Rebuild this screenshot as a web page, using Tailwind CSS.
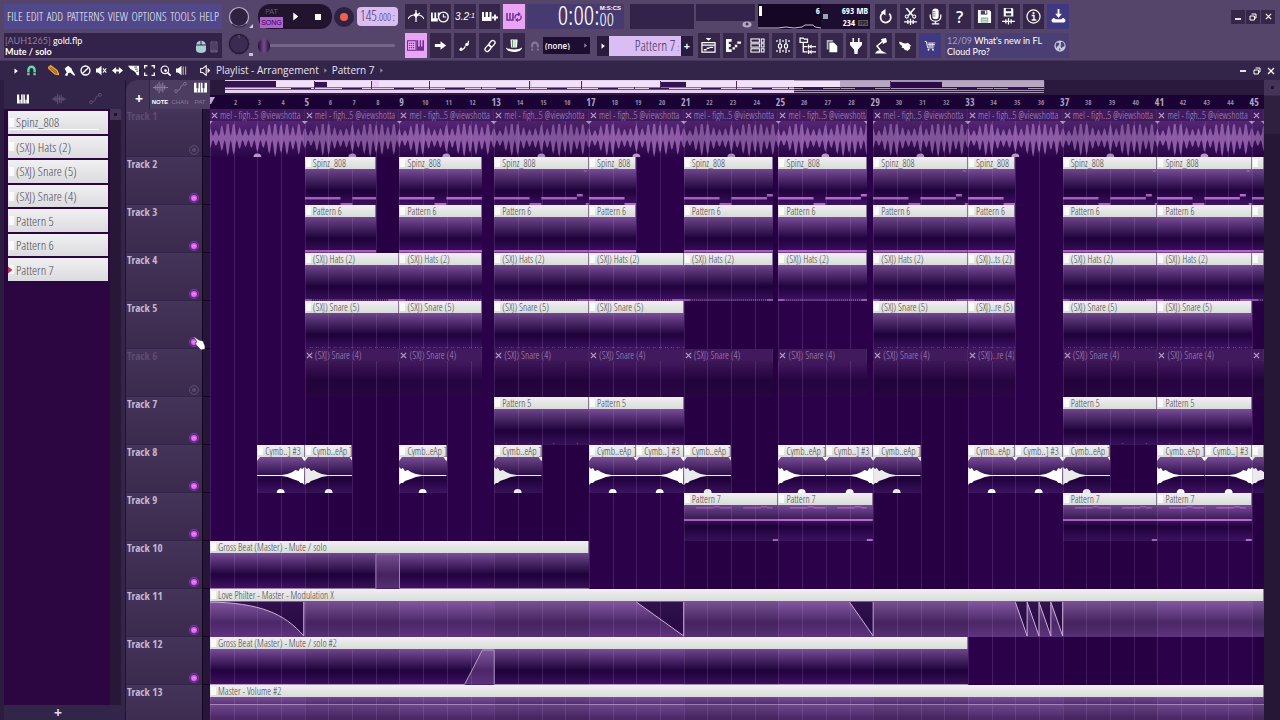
<!DOCTYPE html>
<html lang="en">
<head>
  <meta charset="UTF-8">
  <meta name="viewport" content="width=device-width, initial-scale=1.0">
  <title>gold.flp - Playlist</title>
  <script src="https://cdn.jsdelivr.net/npm/@tailwindcss/browser@4"></script>
</head>
<body class="h-screen overflow-hidden bg-[#33244a] font-['Open_Sans','Noto_Sans',sans-serif] text-white">

  <!-- Icon sprite -->
  <svg class="hidden">
    <symbol id="i-metronome" viewBox="0 0 16 16"><path d="M0 10c1-2 3-4 6-4M16 10c-1-2-3-4-6-4" fill="none" stroke="currentColor" stroke-width="1.200"/><path d="M8 1v12M8 7l4-3" stroke="currentColor" stroke-width="1.200"/><path d="M8 3l2.500 3L8 9 5.500 6z" fill="currentColor"/></symbol>
    <symbol id="i-wait" viewBox="0 0 16 16"><path d="M0 4h1.600v5H3V4h1.600v5H6V4h1.600v2L6 8v4H0z" fill="currentColor"/><circle cx="11" cy="8" r="4.300" fill="none" stroke="currentColor" stroke-width="1.200"/><path d="M11 5.500V8h2.500" fill="none" stroke="currentColor"/></symbol>
    <symbol id="i-keysplus" viewBox="0 0 16 16"><path d="M0 3h2v5h1.500V3h2.500v5h1.500V3h2v9H0z" fill="currentColor"/><path d="M13 5.500v6M10 8.500h6" stroke="currentColor" stroke-width="1.800"/></symbol>
    <symbol id="i-loop" viewBox="0 0 16 16"><path d="M1 4v7h6V4M4 4v6" fill="none" stroke="currentColor" stroke-width="1.500"/><path d="M9 9.500V8a2.500 2.500 0 0 1 4.500-1.500M15 6.500V8a2.500 2.500 0 0 1-4.500 2" fill="none" stroke="currentColor" stroke-width="1.300"/><path d="M12 3l3 2-3 2zM12 13l-3-2 3-2z" fill="currentColor"/></symbol>
    <symbol id="i-keys" viewBox="0 0 16 16"><path d="M0 2h3v7h2.500V2h5v7H13V2h3v12H0z" fill="currentColor"/><path d="M8 2v12M4.200 9v5M11.800 9v5" stroke="#33244a" stroke-width=".8"/></symbol>
    <symbol id="i-typing" viewBox="0 0 16 16"><rect x=".5" y="3.500" width="8" height="9" fill="none" stroke="currentColor"/><path d="M2 6h5.500M2 8h5.500M2 10h5.500" stroke="currentColor" stroke-dasharray="1 .8"/><path d="M9 3h1.500v6H12V3h1.200v6h1.300V3H16v10H9z" fill="currentColor"/></symbol>
    <symbol id="i-arrow" viewBox="0 0 16 16"><path d="M2 6.500h6V3.500L14 8l-6 4.500V9.500H2z" fill="currentColor"/></symbol>
    <symbol id="i-slide" viewBox="0 0 16 16"><path d="M2 13c3 1 6-1 7-4M9 8c3-1 4-3 4-6" fill="none" stroke="currentColor" stroke-width="1.600"/><circle cx="4" cy="12.500" r="2" fill="currentColor"/><circle cx="11" cy="6.500" r="2" fill="currentColor"/></symbol>
    <symbol id="i-link" viewBox="0 0 16 16"><g transform="rotate(-50 8 8)" fill="none" stroke="currentColor" stroke-width="1.500"><rect x="0.500" y="5.500" width="8" height="5" rx="2.500"/><rect x="7.500" y="5.500" width="8" height="5" rx="2.500"/></g></symbol>
    <symbol id="i-hat" viewBox="0 0 16 16"><path d="M4.500 1.500h7l-.5 8h-6z" fill="#fff"/><path d="M6.500 2v7" stroke="#5aa060" stroke-width="1.300"/><path d="M9 2v7" stroke="#b5b0c0"/><path d="M0 9.500c0 6 16 6 16 0-3 2.500-13 2.500-16 0z" fill="#fff"/></symbol>
    <symbol id="i-undo" viewBox="0 0 16 16"><path d="M5 4.500a5.500 5.500 0 1 0 7 .5" fill="none" stroke="currentColor" stroke-width="1.800"/><path d="M8 0v7L3 3.500z" fill="currentColor"/></symbol>
    <symbol id="i-cut" viewBox="0 0 16 16"><path d="M4 0l6 7M12 0L6 7" stroke="currentColor" stroke-width="1.500"/><circle cx="4.500" cy="8" r="1.500" fill="none" stroke="currentColor"/><circle cx="11.500" cy="8" r="1.500" fill="none" stroke="currentColor"/><path d="M2 13h12M5.500 11v4M10.500 11v4M8 10v6" stroke="currentColor" stroke-width="1.200"/></symbol>
    <symbol id="i-mic" viewBox="0 0 16 16"><rect x="5" y="0.500" width="6" height="10" rx="3" fill="currentColor"/><path d="M5 3.500h3M5 5.500h3M5 7.500h3" stroke="#35264a" stroke-width=".6"/><path d="M3 6v2c0 6 10 6 10 0V6M8 12v2.500M4.500 15h7" fill="none" stroke="currentColor" stroke-width="1.200"/></symbol>
    <symbol id="i-save" viewBox="0 0 16 16"><path d="M1 1h12l2 2v12H1z" fill="currentColor"/><path d="M4 1.500h7V6H4z" fill="#4d4060"/><path d="M8.500 2h1.500v3H8.500z" fill="#fff"/><path d="M4 9h8v5.500H4z" fill="#8fb5a5"/><path d="M5 11h6M5 13h6" stroke="#fff" stroke-width=".7"/></symbol>
    <symbol id="i-savenew" viewBox="0 0 16 16"><path d="M3.500 0h8l1 1v7h-9z" fill="currentColor"/><path d="M5.500.5h5V3h-5zM5.500 5h5v2h-5z" fill="#35264a"/><path d="M2 12.500h12M5.500 10.500v4M10.500 10.500v4M8 9.500v6" stroke="currentColor" stroke-width="1.200"/></symbol>
    <symbol id="i-info" viewBox="0 0 16 16"><circle cx="8" cy="8" r="7" fill="none" stroke="currentColor" stroke-width="1.300"/><path d="M6 7h2.500v4.500M6 11.700h5" fill="none" stroke="currentColor" stroke-width="1.500"/><circle cx="8" cy="4.300" r="1.200" fill="currentColor"/></symbol>
    <symbol id="i-download" viewBox="0 0 16 16"><path d="M8 0v7" stroke="currentColor" stroke-width="2"/><path d="M4.500 5h7L8 9.500z" fill="currentColor"/><path d="M2 10c1-1 2 0 3 1h6c1-1 2-2 3-1 2 1 2 4-1 4.500H3C0 14 0 11 2 10z" fill="currentColor"/></symbol>
    <symbol id="i-playlist" viewBox="0 0 16 16"><path d="M5 0h6L8 3z" fill="currentColor"/><path d="M1 5h14v10H1zM1 7.500h14" fill="none" stroke="currentColor" stroke-width="1.300"/><path d="M3 12.500h3M6 11h3M9 10h4" stroke="currentColor" stroke-width="1.500"/></symbol>
    <symbol id="i-piano" viewBox="0 0 16 16"><path d="M0 1h6v3H3v2.500h2v3H3V12h3v3H0z" fill="currentColor"/><path d="M7 11h2.500M9.500 8.500H12M12 5h4" stroke="currentColor" stroke-width="2.500"/></symbol>
    <symbol id="i-rack" viewBox="0 0 16 16"><g fill="none" stroke="currentColor" stroke-width="1.100"><rect x="1" y="1" width="9" height="3.500"/><rect x="1" y="6.200" width="9" height="3.500"/><rect x="1" y="11.500" width="9" height="3.500"/><path d="M12 1h3v3.500h-3zM12 6.200h3v3.500h-3zM12 11.500h3V15h-3z"/></g></symbol>
    <symbol id="i-mixer" viewBox="0 0 16 16"><g stroke="currentColor" fill="none" stroke-width="1.200"><path d="M5 1v5M5 10v5M11 1v5M11 10v5M2 2v2M2 12v2M14 2v2M14 12v2M8 2v2M8 12v2"/><rect x="3.500" y="6" width="3" height="4" rx="1"/><rect x="9.500" y="6" width="3" height="4" rx="1"/></g></symbol>
    <symbol id="i-browser" viewBox="0 0 16 16"><path d="M1 1h3l1 1h3v3H1zM4 5v9h4M4 9h4M9 7v4M12 9h4M9 12v4M12 14h4" fill="none" stroke="currentColor" stroke-width="1.200"/><path d="M9 9l3-2v4zM9 14l3-2v4z" fill="currentColor"/></symbol>
    <symbol id="i-copy" viewBox="0 0 16 16"><path d="M2 1h7v2H4v9H2z" fill="#b8b0c4"/><path d="M5 4h5l4 4v7H5z" fill="currentColor"/></symbol>
    <symbol id="i-plug" viewBox="0 0 16 16"><path d="M4.500 0H6v4h4V0h1.500v4H14v3l-4 4.500-.5 4.500h-3L6 11.500 2 7V4h2.500z" fill="currentColor"/></symbol>
    <symbol id="i-lamp" viewBox="0 0 16 16"><path d="M8 1l5-1 1 4-4 2z" fill="currentColor"/><path d="M10 3L4 8l4 5" fill="none" stroke="currentColor" stroke-width="1.500"/><path d="M2 15.500c1-3 5-4 6-3l6 3z" fill="currentColor"/></symbol>
    <symbol id="i-hand" viewBox="0 0 16 16"><path d="M0 3.500c2-1 5 2 8 2l3-1 4 4-2 1 1 2-3 3-4-1-1-2-3-1 1-2-3-2z" fill="currentColor"/></symbol>
    <symbol id="i-cart" viewBox="0 0 16 16"><path d="M1 2h2l2 8.500h8" fill="none" stroke="currentColor" stroke-width="1.200"/><path d="M4.500 4H15M5 6h9.500M5.500 8H14M8 4v5M11 4v5" stroke="currentColor"/><circle cx="6" cy="13" r="1.200" fill="currentColor"/><circle cx="12" cy="13" r="1.200" fill="currentColor"/></symbol>
    <symbol id="i-globe" viewBox="0 0 16 16"><circle cx="8" cy="8" r="7.500" fill="#c9c6d6"/><path d="M3 4c2-2 5 0 4 2S4 8 4 10 1 8 3 4zM9 3c3-1 5 1 5 4s-2 1-3 3-3-1-2-3 0-2 0-4zM7 11c2 0 2 3 0 3z" fill="#4c4578"/></symbol>
    <symbol id="i-magnet" viewBox="0 0 16 16"><path d="M3.500 15V7a4.500 4.500 0 0 1 9 0v8" fill="none" stroke="currentColor" stroke-width="3.400"/><path d="M1.500 11.200h4M10.500 11.200h4" stroke="#33244a" stroke-width="1.200"/></symbol>
    <symbol id="i-wave" viewBox="0 0 16 16"><path d="M0 8h16M2.500 6v4M4.500 4.500v7M6.500 2v12M8.500 4v8M10.500 3v10M12.500 5.500v5" stroke="currentColor" stroke-width="1.100"/></symbol>
    <symbol id="i-auto" viewBox="0 0 16 16"><circle cx="2.500" cy="12.500" r="1.800" fill="none" stroke="currentColor"/><circle cx="13.500" cy="3.500" r="1.800" fill="none" stroke="currentColor"/><path d="M4 12l3-1.500L9 6l3-1.500" fill="none" stroke="currentColor"/></symbol>
    <symbol id="i-min" viewBox="0 0 16 16"><path d="M2 12h12" stroke="currentColor" stroke-width="3.500"/></symbol>
    <symbol id="i-restore" viewBox="0 0 16 16"><path d="M5 2h9v8h-3M2 6h9v8H2z" fill="none" stroke="currentColor" stroke-width="2"/></symbol>
    <symbol id="i-close" viewBox="0 0 16 16"><path d="M2 2l12 12M14 2L2 14" stroke="currentColor" stroke-width="2.600"/></symbol>
    <symbol id="i-tri" viewBox="0 0 16 16"><path d="M4 1l9 7-9 7z" fill="currentColor"/></symbol>
    <symbol id="i-pencil" viewBox="0 0 16 16"><path d="M0 4l4-3 9 7 3 6-6-1z" fill="#8a5a28" stroke="#f0ab3c" stroke-width="1.800"/><path d="M3 3l9 8" stroke="#f0ab3c" stroke-width="1.200"/></symbol>
    <symbol id="i-brush" viewBox="0 0 16 16"><path d="M1 5l5-4 5 4 1 3 4 6-1 2-6-5-3 1-1 4-4-1 3-4z" fill="currentColor"/></symbol>
    <symbol id="i-ban" viewBox="0 0 16 16"><circle cx="8" cy="8" r="6.500" fill="none" stroke="currentColor" stroke-width="2"/><path d="M3.500 12.500l9-9" stroke="currentColor" stroke-width="2"/></symbol>
    <symbol id="i-mute" viewBox="0 0 16 16"><path d="M0 5h3l5-4v14l-5-4H0z" fill="currentColor"/><path d="M10 5l5 6M15 5l-5 6" stroke="currentColor" stroke-width="1.500"/></symbol>
    <symbol id="i-stretch" viewBox="0 0 16 16"><path d="M0 8l6-5v3.500h4V3l6 5-6 5V9.500H6V13z" fill="currentColor"/></symbol>
    <symbol id="i-slice" viewBox="0 0 16 16"><path d="M0 1h16v14h-3l-2-4-2-2-5-3z" fill="currentColor"/><path d="M9 3h4M10 6h4M12 9h3" stroke="#33244a" stroke-width="1.200"/></symbol>
    <symbol id="i-select" viewBox="0 0 16 16"><path d="M1 5V1h4M11 1h4v4M15 11v4h-4M5 15H1v-4" fill="none" stroke="currentColor" stroke-width="2"/></symbol>
    <symbol id="i-zoom" viewBox="0 0 16 16"><circle cx="7" cy="7" r="5.500" fill="none" stroke="currentColor" stroke-width="1.600"/><path d="M11 11l4.500 4.500" stroke="currentColor" stroke-width="2.500"/><circle cx="8" cy="8" r="2" fill="currentColor"/></symbol>
    <symbol id="i-play" viewBox="0 0 16 16"><path d="M0 5h3l5-4v14l-5-4H0z" fill="currentColor"/><path d="M10.500 2v12M14 2v12" stroke="#d9a58a" stroke-width="1.600"/></symbol>
    <symbol id="i-speaker" viewBox="0 0 16 16"><path d="M1 5h3l5-4v14l-5-4H1z" fill="none" stroke="currentColor" stroke-width="1.500"/><path d="M11 4l4 4-4 4z" fill="currentColor"/></symbol>
    <symbol id="i-led" viewBox="0 0 16 16"><circle cx="8" cy="8" r="7.300" fill="#5b1f7c" stroke="#9a4fb8" stroke-width="1"/><circle cx="8" cy="8" r="5" fill="#d45cee"/><path d="M5 7h6M5 9.500h6" stroke="#f4b6ff" stroke-width="1"/></symbol>
    <symbol id="i-ledoff" viewBox="0 0 16 16"><circle cx="8" cy="8" r="7" fill="none" stroke="#6a5879" stroke-width="1.400"/><circle cx="8" cy="8" r="3.500" fill="#59476a"/></symbol>
  </svg>

  <div class="flex h-full flex-col">

    <!-- Main toolbar -->
    <header class="flex h-[61px] flex-none flex-col gap-1 border-b border-[#47365c] bg-[#56456a] pt-1">

      <div class="flex h-[25px] items-center pl-1">
        <nav class="flex h-[25px] w-[218px] flex-none items-center justify-between bg-[#51488a] px-[3px] font-['Open_Sans_Condensed_Light','Open_Sans_Condensed','Liberation_Sans',sans-serif] text-[12px] text-[#f4f1fa]">
          <button>FILE</button><button>EDIT</button><button>ADD</button><button>PATTERNS</button><button>VIEW</button><button>OPTIONS</button><button>TOOLS</button><button>HELP</button>
        </nav>
        <svg class="ml-[5px] h-[24px] w-[26px] flex-none" viewBox="0 0 26 24"><circle cx="12" cy="12" r="9.500" fill="#2f2142" stroke="#b9adc8" stroke-width="1.200"/><path d="M5 19a9.500 9.500 0 0 0 14 0" fill="none" stroke="#3a2b4e" stroke-width="1.500"/><path d="M26 19v4h-4z" fill="#d4cddd"/></svg>
        <div class="ml-[5px] flex h-[25px] w-[74px] flex-none items-center rounded-xl bg-[#22142f] pl-[2px]">
          <div class="flex w-[23px] flex-col text-center font-['Liberation_Sans',sans-serif] text-[7px] leading-[11px]">
            <button class="text-[#6a5879]">PAT</button>
            <button class="bg-[#b45fd8] text-[#2b0f3d]">SONG</button>
          </div>
          <button class="ml-[8px]" aria-label="Play"><svg class="size-[9px]"><use href="#i-tri"/></svg></button>
          <button class="ml-[15px] size-[6px] bg-white" aria-label="Stop"></button>
        </div>
        <button class="ml-[2px] flex size-[20px] flex-none items-center justify-center rounded-full bg-[#2f2142]" aria-label="Record"><span class="size-[8px] rounded-full bg-[#f0604f]"></span></button>
        <button class="ml-[3px] flex h-[19px] w-[41px] flex-none items-baseline justify-center rounded bg-[#d9bdf3] font-['Open_Sans_Condensed_Light','Open_Sans_Condensed','Liberation_Sans',sans-serif] text-[14px] leading-[18px] text-[#452e5e]" aria-label="Tempo">145<span class="text-[10px]">.000 :</span></button>
        <div class="ml-[7px] grid h-[25px] w-[120px] flex-none grid-cols-5 gap-[3px]">
          <button class="flex items-center justify-center bg-[#35264a]" aria-label="Metronome"><svg class="size-[16px]"><use href="#i-metronome"/></svg></button>
          <button class="flex items-center justify-center bg-[#35264a]" aria-label="Wait for input"><svg class="size-[18px]"><use href="#i-wait"/></svg></button>
          <button class="flex items-center justify-center bg-[#35264a] font-['Liberation_Sans',sans-serif] text-[10px] italic" aria-label="Countdown">3.2<span class="text-[7px]">:1</span></button>
          <button class="flex items-center justify-center bg-[#35264a]" aria-label="Blend notes"><svg class="size-[16px]"><use href="#i-keysplus"/></svg></button>
          <button class="flex items-center justify-center bg-[#e9a4f6] text-[#6b2f8c]" aria-label="Loop record"><svg class="size-[16px]"><use href="#i-loop"/></svg></button>
        </div>
        <div class="ml-[2px] flex h-[25px] w-[97px] flex-none justify-end bg-[#463a70] pr-[3px] font-['Open_Sans_Condensed_Light','Open_Sans_Condensed','Liberation_Sans',sans-serif] leading-[23px]">
          <span class="text-[26px]">0:00:</span><span class="flex flex-col items-end"><span class="font-['Liberation_Sans',sans-serif] text-[6px] font-bold leading-[8px]">M:S:CS</span><span class="pr-[7px] text-[18px] leading-[14px]">00</span></span>
        </div>
        <div class="ml-[6px] h-[25px] w-[64px] flex-none bg-[#33234a]"></div>
        <div class="ml-[2px] h-[25px] w-[59px] flex-none">
          <div class="h-[17px] bg-[#33234a]"></div>
          <svg class="ml-auto mr-[3px] h-[7px] w-[10px]" viewBox="0 0 10 7"><ellipse cx="5" cy="3.500" rx="4.500" ry="3" fill="#b5aac2"/><circle cx="5" cy="3" r="1.500" fill="#453659"/></svg>
        </div>
        <div class="ml-[3px] flex h-[25px] w-[112px] flex-none bg-[#1d0d31] font-['Open_Sans_Condensed','Liberation_Sans',sans-serif] text-[9px] leading-[12px]">
          <div class="flex h-full w-[63px] flex-col bg-[#150626]">
            <div class="flex justify-between pr-[1px]"><span class="ml-[1px] mt-[2px] h-[10px] w-[3px] bg-white"></span><span class="pt-px">6</span></div>
            <svg class="mt-auto h-[6px] w-full" viewBox="0 0 63 6"><path d="M0 5h20l8-1 8 1 8-1 3-2h8l2 2 6 1" fill="none" stroke="#c9c0d3"/></svg>
          </div>
          <div class="flex flex-1 items-center justify-between pr-[2px]">
            <span class="ml-[2px] size-[5px] bg-[#8fa9b8]"></span>
            <span class="flex flex-col items-end"><span>693 MB</span><span class="flex items-center gap-[3px]">234 <span class="bg-[#5c5a50] px-px text-[6px] leading-[6px] text-[#1d0d31]">FPS</span></span></span>
          </div>
        </div>
        <div class="ml-[5px] grid h-[25px] w-[194px] flex-none grid-cols-8 gap-[3px]">
          <button class="flex items-center justify-center bg-[#35264a]" aria-label="Undo"><svg class="size-[15px]"><use href="#i-undo"/></svg></button>
          <button class="flex items-center justify-center bg-[#35264a]" aria-label="Cut"><svg class="size-[17px]"><use href="#i-cut"/></svg></button>
          <button class="flex items-center justify-center bg-[#35264a]" aria-label="Record audio"><svg class="size-[17px]"><use href="#i-mic"/></svg></button>
          <button class="flex items-center justify-center bg-[#35264a] text-[16px] font-semibold leading-none" aria-label="Help">?</button>
          <button class="flex items-center justify-center bg-[#35264a]" aria-label="Save"><svg class="size-[15px]"><use href="#i-save"/></svg></button>
          <button class="flex items-center justify-center bg-[#35264a]" aria-label="Save new version"><svg class="size-[17px]"><use href="#i-savenew"/></svg></button>
          <button class="flex items-center justify-center bg-[#35264a]" aria-label="Info"><svg class="size-[15px]"><use href="#i-info"/></svg></button>
          <button class="flex items-center justify-center bg-[#403880]" aria-label="Updates"><svg class="size-[15px]"><use href="#i-download"/></svg></button>
        </div>
        <div class="ml-auto mr-[5px] flex flex-none gap-px">
          <button class="flex size-[14px] items-center justify-center bg-[#35264a]" aria-label="Minimize"><svg class="size-[8px]"><use href="#i-min"/></svg></button>
          <button class="flex size-[14px] items-center justify-center bg-[#35264a]" aria-label="Restore"><svg class="size-[8px]"><use href="#i-restore"/></svg></button>
          <button class="flex size-[14px] items-center justify-center bg-[#35264a]" aria-label="Close"><svg class="size-[7px]"><use href="#i-close"/></svg></button>
        </div>
      </div>

      <div class="flex h-[25px] items-center pl-1">
        <div class="flex h-[25px] w-[218px] flex-none items-center justify-between bg-[#33234a] pl-px pr-[3px] font-['Lato',sans-serif] text-[9px] leading-[11px]">
          <div><p><span class="text-[#8f80a0]">[AUH1265]</span> gold.flp</p><p class="font-bold">Mute / solo</p></div>
          <svg class="h-[17px] w-[24px]" viewBox="0 0 24 17"><path d="M1 9C1 2 11 2 11 9v4c0 4-10 4-10 0z" fill="#a9cfd4"/><path d="M6 0v8M1 8h10" stroke="#33234a"/><path d="M15 14h8M16 5h6v10h-6zM18 6v8M20 6v8" fill="none" stroke="#6f617e"/></svg>
        </div>
        <svg class="ml-[5px] h-[25px] w-[26px] flex-none" viewBox="0 0 26 25"><circle cx="12" cy="11" r="11" fill="none" stroke="#46365a" stroke-dasharray="1 3"/><circle cx="12" cy="11" r="9.500" fill="#3b2b52" stroke="#281939" stroke-width="1.500"/><path d="M12 2v3" stroke="#6a5879"/><path d="M22 20h4v3h-4z" fill="#c9c0d3"/></svg>
        <input type="range" aria-label="Song position" value="0" class="ml-[5px] h-[3px] w-[137px] flex-none appearance-none rounded-full bg-[#75668a] [&::-webkit-slider-thumb]:h-[14px] [&::-webkit-slider-thumb]:w-[12px] [&::-webkit-slider-thumb]:appearance-none [&::-webkit-slider-thumb]:rounded-full [&::-webkit-slider-thumb]:bg-linear-to-r [&::-webkit-slider-thumb]:from-[#22142f] [&::-webkit-slider-thumb]:via-[#7a4a94] [&::-webkit-slider-thumb]:to-[#22142f]">
        <div class="ml-[10px] grid h-[25px] w-[120px] flex-none grid-cols-5 gap-[3px]">
          <button class="flex items-center justify-center bg-[#e9a4f6] text-[#6b2f8c]" aria-label="Typing keyboard"><svg class="size-[17px]"><use href="#i-typing"/></svg></button>
          <button class="flex items-center justify-center bg-[#35264a]" aria-label="Step"><svg class="size-[15px]"><use href="#i-arrow"/></svg></button>
          <button class="flex items-center justify-center bg-[#35264a]" aria-label="Slide"><svg class="size-[13px]"><use href="#i-slide"/></svg></button>
          <button class="flex items-center justify-center bg-[#35264a]" aria-label="Link"><svg class="size-[14px]"><use href="#i-link"/></svg></button>
          <button class="flex items-center justify-center bg-[#35264a]" aria-label="Hint"><svg class="size-[16px]"><use href="#i-hat"/></svg></button>
        </div>
        <svg class="ml-[5px] size-[10px] flex-none text-[#85769a]"><use href="#i-magnet"/></svg>
        <div class="relative ml-[3px] h-[17px] w-[47px] flex-none bg-[#1d0d31] text-[8px]">
          <select aria-label="Snap" class="h-full w-full appearance-none bg-transparent px-[2px] font-semibold leading-none"><option>(none)</option></select>
          <svg class="pointer-events-none absolute right-[2px] top-[6px] size-[5px] text-[#8f80a0]"><use href="#i-tri"/></svg>
        </div>
        <div class="ml-[7px] flex h-[20px] w-[96px] flex-none">
          <button class="flex w-[12px] items-center justify-center bg-[#2a1a3d]" aria-label="Pattern menu"><svg class="size-[6px]"><use href="#i-tri"/></svg></button>
          <button class="flex-1 bg-[#d9bdf3] pr-[2px] text-right font-['Open_Sans_Condensed_Light','Open_Sans_Condensed','Liberation_Sans',sans-serif] text-[14px] leading-none text-[#452e5e]">Pattern 7<span class="text-[9px]"> :</span></button>
          <button class="w-[12px] bg-[#2a1a3d] text-[11px] font-bold leading-none">+</button>
        </div>
        <div class="ml-[5px] grid h-[25px] w-[243px] flex-none grid-cols-10 gap-[3px]">
          <button class="flex items-center justify-center bg-[#35264a]" aria-label="Playlist"><svg class="size-[15px]"><use href="#i-playlist"/></svg></button>
          <button class="flex items-center justify-center bg-[#35264a]" aria-label="Piano roll"><svg class="size-[15px]"><use href="#i-piano"/></svg></button>
          <button class="flex items-center justify-center bg-[#35264a]" aria-label="Channel rack"><svg class="size-[15px]"><use href="#i-rack"/></svg></button>
          <button class="flex items-center justify-center bg-[#35264a]" aria-label="Mixer"><svg class="size-[16px]"><use href="#i-mixer"/></svg></button>
          <button class="flex items-center justify-center bg-[#35264a]" aria-label="Browser"><svg class="size-[17px]"><use href="#i-browser"/></svg></button>
          <button class="flex items-center justify-center bg-[#35264a]" aria-label="Copy"><svg class="size-[14px]"><use href="#i-copy"/></svg></button>
          <button class="flex items-center justify-center bg-[#35264a]" aria-label="Plugins"><svg class="size-[16px]"><use href="#i-plug"/></svg></button>
          <button class="flex items-center justify-center bg-[#35264a]" aria-label="Tempo tapper"><svg class="size-[16px]"><use href="#i-lamp"/></svg></button>
          <button class="flex items-center justify-center bg-[#35264a]" aria-label="Touch"><svg class="size-[13px]"><use href="#i-hand"/></svg></button>
          <button class="flex items-center justify-center bg-[#403880]" aria-label="Shop"><svg class="size-[12px]"><use href="#i-cart"/></svg></button>
        </div>
        <a href="#" class="ml-1 flex h-[25px] w-[124px] flex-none items-center justify-between bg-[#4a3f74] pl-[2px] pr-[3px] font-['Lato',sans-serif] text-[9px] leading-[11px]">
          <span><span class="text-[#a79cbd]">12/09</span> What's new in FL<br>Cloud Pro?</span>
          <svg class="size-[12px] flex-none"><use href="#i-globe"/></svg>
        </a>
      </div>
    </header>

    <!-- Playlist title bar -->
    <div class="flex h-[19px] flex-none items-center pl-[13px] pr-[5px]">
      <button aria-label="Menu"><svg class="size-[6px]"><use href="#i-tri"/></svg></button>
      <button class="ml-[7px] text-[#5fe0a0]" aria-label="Snap"><svg class="size-[11px]"><use href="#i-magnet"/></svg></button>
      <div class="ml-[11px] flex gap-[5px]">
        <button aria-label="Draw"><svg class="size-[11px]"><use href="#i-pencil"/></svg></button>
        <button aria-label="Paint"><svg class="size-[11px]"><use href="#i-brush"/></svg></button>
        <button aria-label="Delete"><svg class="size-[11px]"><use href="#i-ban"/></svg></button>
        <button aria-label="Mute"><svg class="size-[11px]"><use href="#i-mute"/></svg></button>
        <button aria-label="Slip"><svg class="size-[11px]"><use href="#i-stretch"/></svg></button>
        <button aria-label="Slice"><svg class="size-[11px]"><use href="#i-slice"/></svg></button>
        <button aria-label="Select"><svg class="size-[11px]"><use href="#i-select"/></svg></button>
        <button aria-label="Zoom"><svg class="size-[11px]"><use href="#i-zoom"/></svg></button>
        <button aria-label="Playback"><svg class="size-[11px]"><use href="#i-play"/></svg></button>
      </div>
      <svg class="ml-[13px] size-[11px]"><use href="#i-speaker"/></svg>
      <h1 class="ml-[5px] flex items-center gap-[4px] text-[10px] font-medium text-[#e9e3f1]">Playlist - Arrangement <svg class="size-[5px] text-[#8f80a0]"><use href="#i-tri"/></svg> Pattern 7 <svg class="size-[5px] text-[#8f80a0]"><use href="#i-tri"/></svg></h1>
      <div class="ml-auto flex items-center gap-[6px]">
        <button aria-label="Minimize"><svg class="mb-1 size-[8px]"><use href="#i-min"/></svg></button>
        <button aria-label="Restore"><svg class="size-[8px]"><use href="#i-restore"/></svg></button>
        <button aria-label="Close"><svg class="size-[8px]"><use href="#i-close"/></svg></button>
      </div>
    </div>

    <main class="flex min-h-0 flex-1">

      <!-- Picker -->
      <aside class="flex w-[125px] flex-none flex-col border-l-4 border-[#2b1c40] pr-1">
        <div class="flex h-[29px] flex-none items-center gap-[23px] pl-[13px] pt-[8px] text-[#67577a]">
          <button class="text-white" aria-label="Patterns"><svg class="size-[12px]"><use href="#i-keys"/></svg></button>
          <button aria-label="Audio"><svg class="size-[14px]"><use href="#i-wave"/></svg></button>
          <button aria-label="Automation"><svg class="size-[13px]"><use href="#i-auto"/></svg></button>
        </div>
        <div class="flex min-h-0 flex-1">
          <div class="flex-1 bg-[#2b0640] pl-1 pr-[2px] pt-[2px]">
            <ul id="picker" class="flex h-[170px] flex-col gap-[2px] font-['Open_Sans_Condensed_Light','Open_Sans_Condensed','Liberation_Sans',sans-serif] text-[13px] leading-[16px] text-[#4e4a54]"></ul>
          </div>
          <div class="w-[11px] bg-[#291738]"><div class="flex h-[11px] items-center justify-center bg-[#453458]"><span class="size-[3px] bg-[#22142f]"></span></div></div>
        </div>
        <button class="h-[15px] flex-none pr-[9px] text-[14px] font-bold leading-none text-[#e3d8ee]">+</button>
      </aside>

      <!-- Track headers -->
      <section class="flex w-[85px] flex-none flex-col border-l border-[#22142f]">
        <div class="flex h-[29px] flex-none bg-[#33244a]">
          <button class="w-[23px] rounded-tl-xl bg-[#443458] pl-[3px] pt-[9px] text-[14px] font-bold leading-none">+</button>
          <div class="grid flex-1 grid-cols-3 border-l border-[#33244a] bg-[#4d3d61] font-['Liberation_Sans',sans-serif] text-[6px] text-[#88799a]">
            <button class="flex flex-col items-center gap-[3px] font-bold text-white"><svg class="size-[15px] text-[#8c7d9e]"><use href="#i-wave"/></svg>NOTE</button>
            <button class="flex flex-col items-center gap-[3px]"><svg class="size-[15px] p-px"><use href="#i-auto"/></svg>CHAN</button>
            <button class="flex flex-col items-center gap-[3px]"><svg class="size-[15px] p-px text-white"><use href="#i-keys"/></svg>PAT</button>
          </div>
        </div>
        <ol id="tracks" class="min-h-0 flex-1 overflow-hidden font-['Open_Sans_Condensed','Liberation_Sans',sans-serif] text-[11px] leading-[13px] text-[#c4b7d2]"></ol>
      </section>

      <!-- Arrangement -->
      <section class="flex min-w-0 flex-1 flex-col bg-[#2b0149]">
        <div class="flex h-[15px] flex-none items-center bg-[#2a183d]">
          <svg class="h-full flex-1" viewBox="0 0 1054 15" preserveAspectRatio="none" id="minimap"></svg>
        </div>
        <div id="ruler" class="relative h-[14px] flex-none overflow-hidden bg-[#1a0334] font-['Open_Sans_Condensed','Liberation_Sans',sans-serif] text-[#b3a3c6]"></div>
        <div class="relative min-h-0 flex-1 overflow-hidden">
          <div id="lanes" class="font-['Open_Sans_Condensed_Light','Open_Sans_Condensed','Liberation_Sans',sans-serif] text-[10px] leading-[12px]"></div>
          <div id="grid" class="pointer-events-none absolute inset-0 z-10"></div>
        </div>
      </section>

      <div class="flex w-[16px] flex-none flex-col items-center bg-[#271736]">
        <div class="flex h-[15px] w-full items-center justify-center bg-[#453458]"><span class="size-[3px] bg-[#22142f]"></span></div>
        <div class="h-[39px] w-full border-t border-[#3a2a4b] bg-[#30203f]"></div>
      </div>
    </main>
  </div>

  <!-- Mouse pointer -->
  <svg class="absolute left-[193px] top-[336px] z-30 h-[15px] w-[13px]" viewBox="0 0 13 15"><path d="M0 0l6 4 4 1 2 5v3l-4 1-4-4-2-3 2-1z" fill="#fff" stroke="#2b1440" stroke-width=".6"/></svg>

  <script>
    const BARS = 44.5;
    const NS = 'Spinz_808', HATS = '(SXJ) Hats (2)', SN5 = '(SXJ) Snare (5)', SN4 = '(SXJ) Snare (4)';
    const VOX = 'mel - figh..5 @viewshotta', FWD = 'Cymb..eAp ]', REV = 'Cymb..] #3';

    // [start bar, end bar, optional name]
    const main = [[5, 8], [9, 12.5], [13, 17], [17, 19], [21, 24.75], [25, 28.75], [29, 33], [33, 35], [37, 41], [41, 45], [45, 45.5, '']];
    const hats = [[5, 9], [9, 12.5], [13, 17], [17, 21], [21, 24.75], [25, 28.75], [29, 33], [33, 35, '(SXJ)..ts (2)'], [37, 41], [41, 45], [45, 45.5, '']];
    const snare = [[5, 9], [9, 12.5], [13, 17], [17, 21], [29, 33], [33, 35, '(SXJ)..re (5)'], [37, 41], [41, 45]];
    const snare4 = hats.map(c => c[0] === 33 ? [33, 35, '(SXJ)..re (4)'] : c);
    const vox = [1, 5, 9, 13, 17, 21, 25, 29, 33, 37, 41].map(b => [b, b === 25 ? 28.75 : b + 4]).concat([[45, 45.5, '']]);
    const cymbals = [[3, 5, REV], [5, 7, FWD], [9, 11, FWD], [13, 15, FWD], [17, 19, FWD], [19, 21, REV], [21, 23, FWD], [25, 27, FWD], [27, 29, REV], [29, 31, FWD], [33, 35, FWD], [35, 37, REV], [37, 39, FWD], [41, 43, FWD], [43, 45, REV], [45, 45.5, '']];

    const tracks = [
      { kind: 'vox', name: VOX, muted: true, clips: vox },
      { kind: 'bass', name: NS, clips: main },
      { kind: 'pat6', name: 'Pattern 6', clips: main },
      { kind: 'hats', name: HATS, clips: hats },
      { kind: 'snare', name: SN5, clips: snare },
      { kind: 'none', name: SN4, muted: true, clips: snare4 },
      { kind: 'pat5', name: 'Pattern 5', clips: [[13, 17], [17, 21], [37, 41], [41, 45]] },
      { kind: 'cymbal', name: '', clips: cymbals },
      { kind: 'pat7', name: 'Pattern 7', clips: [[21, 25], [25, 29], [37, 41], [41, 45]] },
      { kind: 'gate1', name: 'Gross Beat (Master) - Mute / solo', clips: [[1, 17]] },
      { kind: 'filter', name: 'Love Philter - Master - Modulation X', clips: [[1, 45.5]] },
      { kind: 'gate2', name: 'Gross Beat (Master) - Mute / solo #2', clips: [[1, 33]] },
      { kind: 'volume', name: 'Master - Volume #2', clips: [[1, 45.5]] },
    ];

    // Clip contents, 24 units to a bar and 36 units high
    const rect = (x, y, w, h, fill) => `<rect x="${x}" y="${y}" width="${w}" height="${h}" fill="${fill}"/>`;
    const NOTE = '#b566cf';

    function contents(kind, len, name) {
      const w = len * 24;
      let s = '';
      if (kind === 'bass') {
        s += rect(0, 28, 36, 2.5, NOTE) + rect(36, 34, 12, 2, NOTE) + rect(48, 28, 36, 2.5, NOTE);
        s += rect(84, 25, 6, 2.5, NOTE) + rect(93, 34, 3, 2, NOTE) + rect(91, 1, 3, 2, '#9a5cb5');
      } else if (kind === 'pat6') {
        s += rect(0, 33, w, 2.5, NOTE);
      } else if (kind === 'hats') {
        for (let x = 0; x < w; x += 2) s += rect(x, 34, 1, 2, '#8a4aa6');
        s += rect(0, 34, 6, 2, '#9a57b6') + rect(84, 34, 12, 2, '#9a57b6');
      } else if (kind === 'snare') {
        for (let x = 5; x < w; x += 6) s += rect(x, 34, 1, 1, '#8a4aa6') + rect(x + 2, 34, x % 4 ? 1 : 3, 1, '#6e3a8a');
      } else if (kind === 'pat5') {
        for (let x = 12; x < w; x += 24) s += rect(x, 34, 1, 1, '#8a4aa6');
      } else if (kind === 'pat7') {
        for (const x of [12, 60]) s += rect(x, 2, 18, 1.5, '#a45cc0') + rect(x + 18, 1, 6, 1.5, '#a45cc0') + rect(x + 24, 2, x === 12 ? 12 : 6, 1.5, '#a45cc0');
        s += rect(0, 14, w, 2, NOTE) + rect(90, 34, 6, 2, NOTE);
      } else if (kind === 'vox') {
        // peak heights of the 16 swells in one clip
        const peaks = [8, 6, 11, 16, 15, 9, 7, 8, 12, 8, 14, 17, 13, 15, 10, 15];
        let top = '', bottom = '';
        for (let x = 0; x <= w; x++) {
          const p = peaks[Math.floor((x + 3) / 6) % 16];
          const a = 2 + p * Math.pow(Math.abs(Math.cos(x * Math.PI / 6)), 2);
          top += `L${x} ${17 - Math.min(a, 14)} `;
          bottom = `L${x} ${17 + a} ` + bottom;
        }
        s += `<path d="M0 17 ${top}${bottom}Z" fill="#8d5ba6"/><path d="M-3 0h6l-3 3zM${w - 3} 0h6l-3 3z" fill="#b79ac8"/>`;
        s += `<path d="M44 36a4 3.500 0 0 1 8 0z" fill="#b79ac8"/>`;
      } else if (kind === 'cymbal') {
        const shape = 'M0 10l2 2 2-1 2 3 3-1 3 2 5 2 6 1 25 0v1l-25 0-6 1-5 2-3 1-3 1-2 2-2 0-2 2z';
        s += name === REV ? `<g transform="translate(48 0) scale(-1 1)"><path d="${shape}" fill="#fff"/></g>` : `<path d="${shape}" fill="#fff"/>`;
        s += `<path d="M-3 0h6l-3 4zM45 0h6l-3 4zM20 36a4 4 0 0 1 8 0z" fill="#fff"/>`;
      } else if (kind === 'gate1') {
        s += `<path d="M0 35.500H168V1h24v34.500H${w}" fill="#9a70b5" fill-opacity=".35" stroke="#9d7fb2" vector-effect="non-scaling-stroke"/>`;
      } else if (kind === 'gate2') {
        s += `<path d="M0 35.500H258L276 1h12v34.500H${w}" fill="#9a70b5" fill-opacity=".35" stroke="#b79ac8" vector-effect="non-scaling-stroke"/>`;
      } else if (kind === 'filter') {
        s += `<rect width="${w}" height="36" fill="#9a70b5" fill-opacity=".35"/>`;
        s += '<g fill="#25063f" fill-opacity=".85" stroke="#cbb0da"><path d="M0 1C50 2 75 12 95 35V1" vector-effect="non-scaling-stroke"/>';
        for (const [a, b] of [[18, 20], [27, 28], [34, 34.5], [34.5, 35], [35, 35.5], [35.5, 36]]) s += `<path d="M${a * 24} 1L${b * 24} 35V1" vector-effect="non-scaling-stroke"/>`;
        s += '</g>';
      } else if (kind === 'volume') {
        s += `<rect y="7" width="${w}" height="29" fill="#9a70b5" fill-opacity=".35"/>` + rect(0, 7, w, 1, '#a884bd');
      }
      return s;
    }

    const pct = bars => bars / BARS * 100 + '%';

    document.getElementById('lanes').innerHTML = tracks.map(t => `<div class="relative h-[48px]">${t.clips.map(([from, to, label]) => {
      const name = label ?? t.name;
      const head = t.muted ? 'bg-[#411a5e] text-[#a88bbd]' : 'bg-linear-to-b from-[#f0f0f0] to-[#d9dadb] text-[#45424a]';
      const body = t.kind === 'none' ? 'bg-linear-to-b from-[#43195f] via-[#260440] via-55% to-[#2b0645]'
        : t.muted ? 'bg-linear-to-b from-[#552574] to-[#2a0548]'
        : 'bg-linear-to-b from-[#7a4d97] via-[#22023f] via-60% to-[#3d1461]';
      const mark = t.muted ? '<svg class="size-[7px] flex-none text-[#b9a3c9]"><use href="#i-close"/></svg>'
        : '<span class="h-[8px] w-[5px] flex-none bg-white/80"></span>';
      return `<div class="absolute inset-y-0 overflow-hidden" style="left:${pct(from - 1)};width:${pct(to - from)}">
        <div class="relative z-20 flex h-[12px] items-center gap-[2px] overflow-hidden whitespace-nowrap border-r border-[#4a3060]/60 pl-px ${head}">${mark}${name}</div>
        <svg class="block h-[36px] w-full ${body}" viewBox="0 0 ${(to - from) * 24} 36" preserveAspectRatio="none">${contents(t.kind, to - from, name)}</svg>
      </div>`;
    }).join('')}</div>`).join('');

    document.getElementById('tracks').innerHTML = tracks.map((t, i) => `<li class="flex h-[48px]">
      <div class="flex flex-1 justify-between border-b border-[#35254a] bg-linear-to-b from-[#45345a] to-[#3a2a4c] pl-px pr-[3px]">
        <span class="${t.muted ? 'text-[#5d4c70]' : ''}">Track ${i + 1}</span>
        <button class="self-end pb-px" aria-label="Mute track ${i + 1}"><svg class="size-[10px]"><use href="${t.muted ? '#i-ledoff' : '#i-led'}"/></svg></button>
      </div>
      <div class="w-[8px] border-b border-l border-[#12051f] bg-[#261538]"></div>
    </li>`).join('');

    document.getElementById('picker').innerHTML = [NS, HATS, SN5, SN4, 'Pattern 5', 'Pattern 6', 'Pattern 7'].map((n, i) => `<li class="relative flex flex-1">
      <button class="flex flex-1 items-center gap-[2px] bg-linear-to-b from-[#f0f0f2] to-[#dcdce0] pl-px"><span class="h-[9px] w-[5px] bg-white/80"></span>${n}</button>
      ${i === 0 ? '<span class="absolute bottom-[4px] left-[1px] h-px w-[90px] bg-white"></span>' : ''}
      ${i === 6 ? '<span class="absolute -left-[2px] top-[8px] text-[#c0304f]"><svg class="size-[8px]"><use href="#i-tri"/></svg></span>' : ''}
    </li>`).join('');

    let ruler = '<svg class="absolute left-0 top-[2px] h-[7px] w-[5px]" viewBox="0 0 5 7"><path d="M0 0h5L1 7H0z" fill="#c9a4dd"/></svg>';
    let grid = '';
    for (let b = 1; b <= 45; b++) {
      const big = b % 4 === 1;
      if (b > 1) ruler += `<span class="absolute top-px w-[20px] text-center leading-[13px] ${big ? 'text-[10px]' : 'text-[7px] text-[#9484a8]'}" style="left:calc(${pct(b - 1)} - 8px)">${b}</span>`;
      grid += `<div class="absolute inset-y-0 border-l border-[#b58ad0]/20" style="left:${pct(b - 1)}"></div>`;
      if (b % 8 === 5) grid += `<div class="absolute inset-y-0 bg-black/8" style="left:${pct(b - 1)};width:${pct(4)}"></div>`;
    }
    document.getElementById('ruler').innerHTML = ruler;
    document.getElementById('grid').innerHTML = grid;

    // Overview strip: one block per section, visible part bright
    const blocks = [[66, 104], [117, 161], [169, 219], [220, 271], [271, 319], [322, 371], [373, 424], [424, 450], [476, 526], [527, 578], [578, 630], [630, 680], [732, 783], [783, 834]];
    document.getElementById('minimap').innerHTML = rect(15, 0, 569, 13, '#e7cdf2') + rect(15, 1, 51, 6, '#33144e') + rect(15, 7, 569, 1, '#8f6ba6')
      + rect(15, 9, 569, 1, '#6e4a88') + rect(584, 0, 250, 13, '#a793b3') + rect(584, 7, 250, 1, '#33144e') + rect(584, 9, 250, 1, '#33144e') + rect(584, 11, 250, 1, '#33144e')
      + rect(681, 2, 51, 6, '#2a0b45') + rect(450, 2, 26, 5, '#33144e') + rect(104, 2, 13, 5, '#33144e')
      + blocks.map(([a, b]) => rect(a, 1, b - a, 6, a > 583 ? '#b7a7c0' : '#f1e2f8') + rect(b, 1, 1, 8, '#4a2a66') + rect(a + 15, 8, 20, 1, '#33144e')).join('');
  </script>
</body>
</html>
